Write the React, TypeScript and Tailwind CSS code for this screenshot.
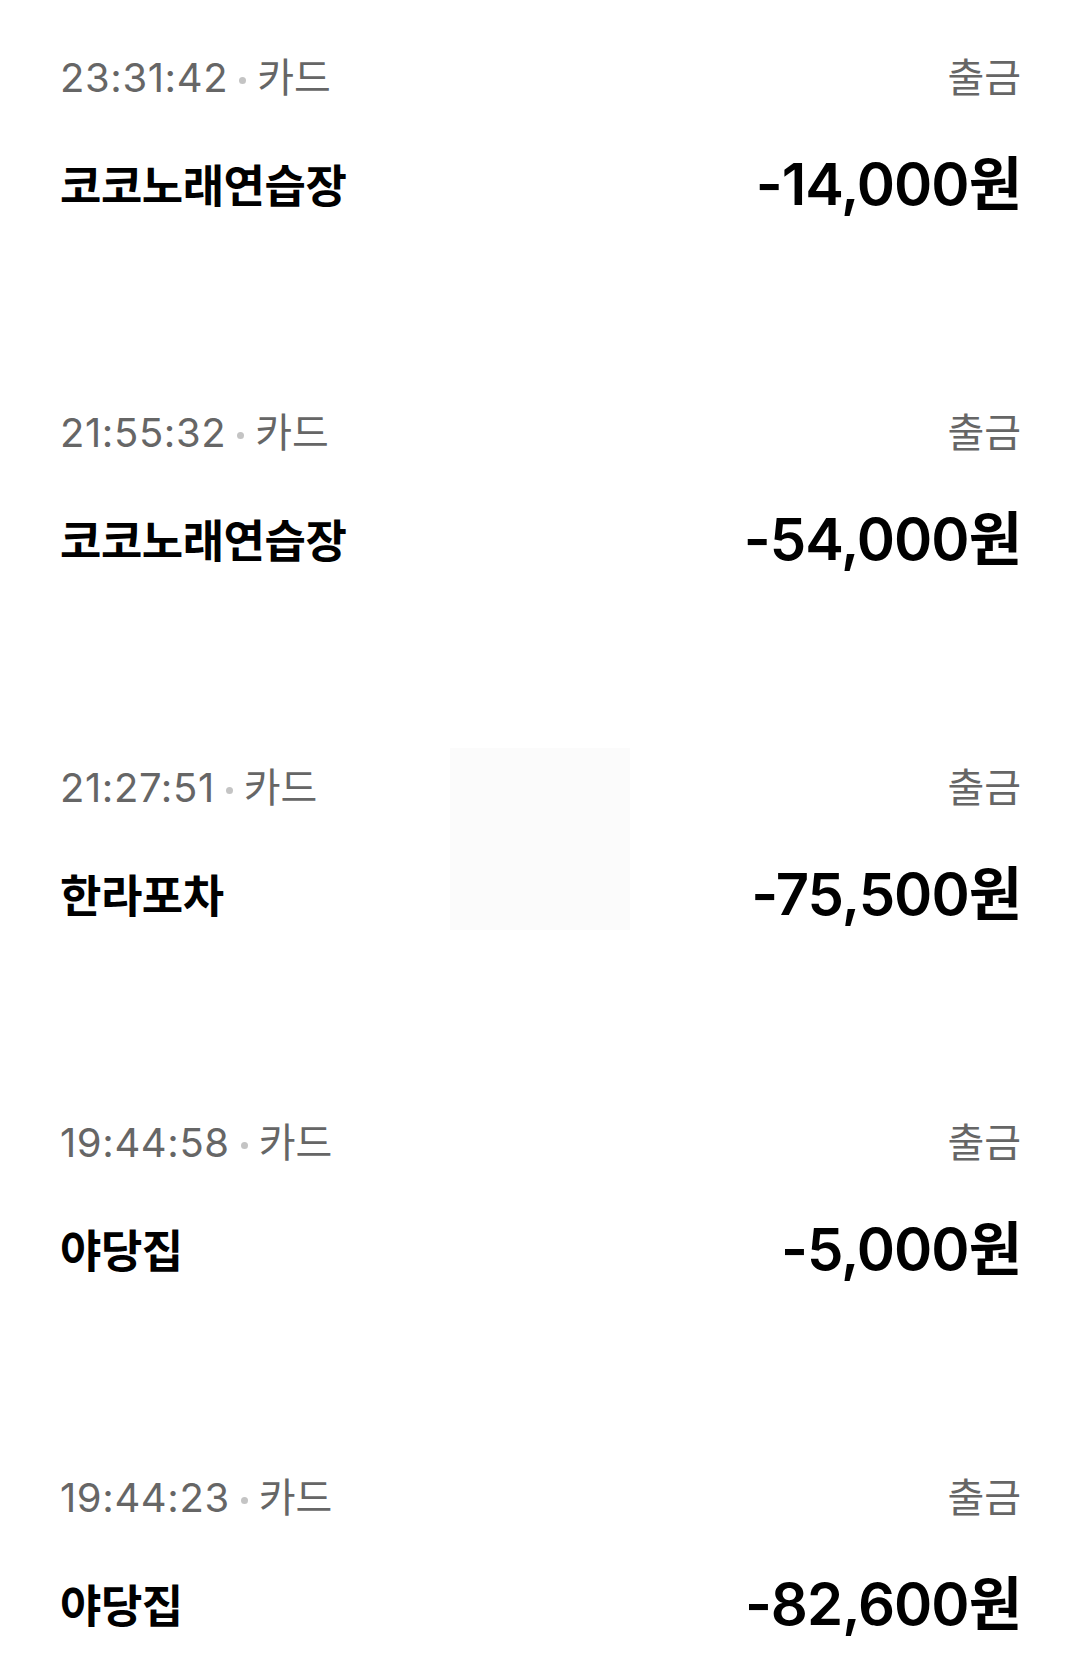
import React from "react";

type Tx = {
  time: string;
  method: string;
  name: string;
  amount: string;
};

const txs: Tx[] = [
  { time: "23:31:42", method: "카드", name: "코코노래연습장", amount: "-14,000원" },
  { time: "21:55:32", method: "카드", name: "코코노래연습장", amount: "-54,000원" },
  { time: "21:27:51", method: "카드", name: "한라포차", amount: "-75,500원" },
  { time: "19:44:58", method: "카드", name: "야당집", amount: "-5,000원" },
  { time: "19:44:23", method: "카드", name: "야당집", amount: "-82,600원" },
];

const font = {
  fontFamily: '"Inter", "Noto Sans CJK KR", "Noto Sans", sans-serif',
};

function TxRow({ tx }: { tx: Tx }) {
  return (
    <div className="h-[355px]">
      <div className="flex items-center justify-between h-[56px] text-[40px] text-[#666666]">
        <div className="flex items-center">
          <span className="tracking-[0.6px]">{tx.time}</span>
          <span className="mx-[11px] mt-[4px] w-[7px] h-[7px] rounded-full bg-[#c4c4c4]" />
          <span>{tx.method}</span>
        </div>
        <span>출금</span>
      </div>
      <div className="flex items-center justify-between h-[64px] mt-[49px]">
        <span className="text-[45px] font-bold text-black tracking-[-0.5px]">{tx.name}</span>
        <span className="mb-[6px] text-[58px] font-semibold text-black tracking-[-1px]">{tx.amount}</span>
      </div>
    </div>
  );
}

export default function App() {
  return (
    <div className="relative w-[1080px] h-[1680px] bg-white overflow-hidden" style={font}>
      <div className="flex flex-col pt-[50px] pl-[60px] pr-[59px]">
        {txs.map((tx) => (
          <TxRow key={tx.time} tx={tx} />
        ))}
      </div>
      <div className="absolute left-[450px] top-[748px] w-[180px] h-[182px] bg-[#fbfbfb]" />
    </div>
  );
}
